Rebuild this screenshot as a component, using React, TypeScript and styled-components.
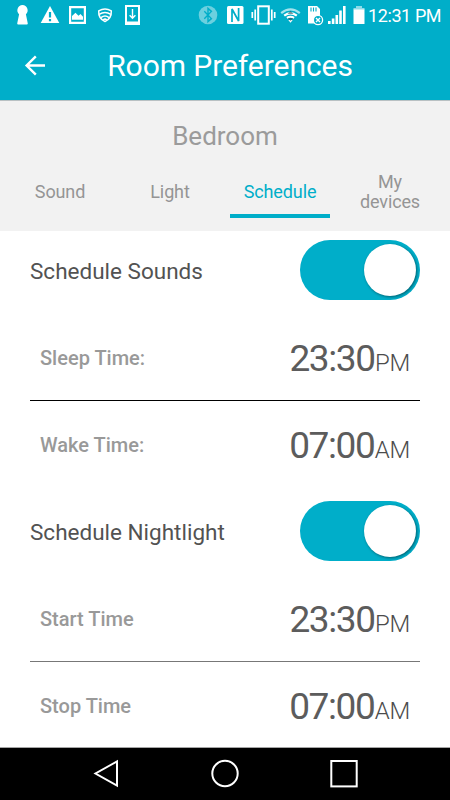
import React from "react";
import styled, { createGlobalStyle } from "styled-components";

const TEAL = "#00aec9";

const GlobalStyle = createGlobalStyle`
  *, *::before, *::after { box-sizing: border-box; }
  html, body { margin: 0; padding: 0; background: #fff; }
  body { font-family: Roboto, "Noto Sans", sans-serif; -webkit-font-smoothing: antialiased; }
`;

const Screen = styled.div`
  width: 450px;
  height: 800px;
  display: flex;
  flex-direction: column;
  overflow: hidden;
  background: #fff;
`;

const StatusBar = styled.div`
  height: 32px;
  flex: none;
  display: flex;
  justify-content: space-between;
  background: ${TEAL};
  color: #fff;
`;

const StatusGroup = styled.div`
  display: flex;
  height: 32px;
`;

const StatusIcon = styled.svg`
  display: block;
  flex: none;
  height: 32px;
`;

const Clock = styled.span`
  width: 82px;
  height: 32px;
  line-height: 32px;
  font-size: 18px;
  letter-spacing: -0.4px;
  white-space: nowrap;
`;

const Header = styled.header`
  height: 69px;
  flex: none;
  display: grid;
  grid-template-columns: 70px 320px 60px;
  align-items: center;
  background: ${TEAL};
  border-bottom: 1px solid #b9c1c3;
  color: #fff;
`;

const BackButton = styled.button`
  width: 70px;
  height: 66px;
  padding: 0;
  border: 0;
  background: none;
  display: block;
`;

const Title = styled.h1`
  margin: 0;
  text-align: center;
  font-size: 30px;
  font-weight: 400;
  line-height: 68px;
  letter-spacing: -0.06px;
`;

const RoomPanel = styled.section`
  height: 130px;
  flex: none;
  background: #f2f2f2;
`;

const RoomName = styled.h2`
  margin: 0;
  height: 65px;
  padding-top: 4px;
  line-height: 62px;
  text-align: center;
  font-size: 26px;
  font-weight: 400;
  color: #9b9b9b;
`;

const Tabs = styled.nav`
  display: flex;
  padding: 0 5px;
`;

const Tab = styled.div<{ $active?: boolean }>`
  width: 100px;
  height: 52px;
  margin: 0 5px;
  padding: 4px 15px 0;
  display: flex;
  align-items: center;
  justify-content: center;
  text-align: center;
  font-size: 18px;
  line-height: 20px;
  letter-spacing: -0.12px;
  color: ${(p) => (p.$active ? TEAL : "#959595")};
  border-bottom: 4px solid ${(p) => (p.$active ? TEAL : "transparent")};
`;

const Content = styled.main`
  flex: 1;
  min-height: 0;
  overflow: hidden;
  padding: 9px 30px 0;
`;

const Group = styled.section`
  height: 261px;
`;

const GroupHead = styled.div`
  height: 60px;
  display: flex;
  align-items: center;
  justify-content: space-between;
`;

const GroupTitle = styled.h3`
  margin: 0;
  padding-top: 2px;
  font-size: 22.5px;
  font-weight: 400;
  color: #525252;
`;

const Switch = styled.div`
  width: 120px;
  height: 60px;
  padding: 4px;
  border-radius: 30px;
  display: flex;
  justify-content: flex-end;
  background: ${TEAL};
`;

const Knob = styled.div`
  width: 52px;
  height: 52px;
  border-radius: 50%;
  background: #fff;
  box-shadow: 1px 1px 3px rgba(0, 0, 0, 0.45);
`;

const TimeList = styled.div`
  padding-top: 16px;
`;

const TimeRow = styled.div<{ $line?: string }>`
  height: ${(p) => (p.$line ? 85 : 88)}px;
  padding: 0 10px;
  display: flex;
  align-items: center;
  justify-content: space-between;
  border-bottom: ${(p) => (p.$line ? `1px solid ${p.$line}` : "0")};
`;

const TimeLabel = styled.span`
  font-size: 20px;
  font-weight: 500;
  color: #999;
`;

const TimeValue = styled.span`
  display: flex;
  align-items: baseline;
  padding-top: 5px;
  font-size: 37px;
  line-height: 42px;
  letter-spacing: -1.4px;
  color: #5c5c5c;
`;

const Meridiem = styled.span`
  margin-left: 0.5px;
  font-size: 24px;
  font-weight: 300;
  letter-spacing: -0.3px;
  color: #4c4c4c;
`;

const NavBar = styled.footer`
  height: 53px;
  flex: none;
  background: #000;
  border-top: 1px solid #a5a5a5;
`;

const NavIcons = styled.svg`
  display: block;
`;

interface TimeEntry {
  label: string;
  time: string;
  half: string;
}

interface ScheduleProps {
  title: string;
  line: string;
  entries: [TimeEntry, TimeEntry];
}

function Schedule({ title, line, entries }: ScheduleProps) {
  return (
    <Group>
      <GroupHead>
        <GroupTitle>{title}</GroupTitle>
        <Switch role="switch" aria-checked="true">
          <Knob />
        </Switch>
      </GroupHead>
      <TimeList>
        {entries.map((e, i) => (
          <TimeRow key={e.label} $line={i === 0 ? line : undefined}>
            <TimeLabel>{e.label}</TimeLabel>
            <TimeValue>
              {e.time}
              <Meridiem>{e.half}</Meridiem>
            </TimeValue>
          </TimeRow>
        ))}
      </TimeList>
    </Group>
  );
}

function Notifications() {
  return (
    <StatusIcon width="150" height="32" viewBox="0 0 150 32" fill="none" stroke="#fff">
      <path d="M22.5 5a5.3 5.3 0 0 1 3.4 9.2L27.8 23.5Q27.8 24.6 26.8 24.6H18.2Q17.2 24.6 17.2 23.5L19.1 14.2A5.3 5.3 0 0 1 22.5 5Z" fill="#fff" stroke="none" />
      <path d="M50 6 59.3 23H40.7Z" fill="#fff" stroke="none" />
      <path d="M50 12v5.5M50 19v2.2" stroke={TEAL} strokeWidth="2.2" />
      <path d="M69 6h17v18H69ZM71.2 8.2V21.8H83.8V8.2Z" fill="#fff" fillRule="evenodd" stroke="none" />
      <path d="M72 19.8V16L75.5 12.8 78.5 15.8 80.5 14 83 16.8V19.8Z" fill="#fff" stroke="none" />
      <path d="M98.7 10.8Q105 7.2 111.3 10.8Q111.8 18.5 105 21.6Q98.2 18.5 98.7 10.8Z" strokeWidth="1.5" strokeLinejoin="round" />
      <path d="M99.2 14.4Q105 10.6 110.8 14.4M101 17.6Q105 14.4 109 17.6M103.2 20Q105 18.4 106.8 20" strokeWidth="1.6" />
      <path d="M125 5h15v20H125ZM127 7V21.5H138V7Z" fill="#fff" fillRule="evenodd" stroke="none" />
      <path d="M132.5 9v9M129.6 15.3 132.5 18.2 135.4 15.3" strokeWidth="1.4" />
    </StatusIcon>
  );
}

function SystemIcons() {
  return (
    <StatusIcon width="178" height="32" viewBox="190 0 178 32" fill="none" stroke="#fff">
      <circle cx="208" cy="15" r="9.3" fill="#fff" fillOpacity=".42" stroke="none" />
      <path d="M204.3 11.2 211.4 18.6 208 21.6V8.4L211.4 11.4 204.3 18.8" stroke={TEAL} strokeWidth="1.4" />
      <rect x="227" y="6" width="16.5" height="18" rx="1.5" fill="#fff" stroke="none" />
      <path d="M232 22V9L238.6 21V8" stroke={TEAL} strokeWidth="1.7" />
      <rect x="258.2" y="6.3" width="10.6" height="17.4" strokeWidth="2" />
      <path d="M255.2 9.5v11M271.8 9.5v11M252.3 12v6M274.7 12v6" strokeWidth="1.7" />
      <path d="M281.2 13.2Q290.5 5.7 299.8 13.2" stroke="#a4e3ed" strokeWidth="2.2" />
      <path d="M284.2 15.7Q290.5 10.8 296.8 15.7M287 18Q290.5 15.5 294 18" strokeWidth="2.2" />
      <path d="M288.3 20h4.4L290.5 22.8Z" fill="#fff" stroke="none" />
      <path d="M287.5 14 290.5 11 293.5 14ZM287.5 18 290.5 21 293.5 18Z" fill="#31525a" fillOpacity=".6" stroke="none" />
      <path d="M308 6H317L320 9V23.5H308Z" fill="#fff" stroke="none" />
      <path d="M311 7.5v4M313.5 7.5v4M316 7.5v4" stroke={TEAL} strokeWidth="1.1" />
      <circle cx="318" cy="20" r="4.6" fill={TEAL} strokeWidth="1.3" />
      <path d="M316 18 320 22M320 18 316 22" strokeWidth="1.4" />
      <path d="M328 21h2.6v3H328ZM331.8 18.5h2.6V24h-2.6ZM335.5 15h2.6v9h-2.6ZM339.2 10.5h2.6V24h-2.6ZM343 6h2.6v18H343Z" fill="#fff" stroke="none" />
      <path d="M356 6h6v2h2.5V10H353.5V8H356Z" fill="#8cdbe8" stroke="none" />
      <path d="M353.5 9.5h11v14.5h-11Z" fill="#fff" stroke="none" />
    </StatusIcon>
  );
}

export default function App() {
  return (
    <>
      <GlobalStyle />
      <Screen>
        <StatusBar>
          <Notifications />
          <StatusGroup>
            <SystemIcons />
            <Clock>12:31 PM</Clock>
          </StatusGroup>
        </StatusBar>
        <Header>
          <BackButton aria-label="Back">
            <svg width="70" height="66" viewBox="0 0 70 66" fill="none" stroke="#fff" strokeWidth="2.4">
              <path d="M45 32.5H27M35.8 23.3 26.6 32.5 35.8 41.7" />
            </svg>
          </BackButton>
          <Title>Room Preferences</Title>
        </Header>
        <RoomPanel>
          <RoomName>Bedroom</RoomName>
          <Tabs>
            <Tab>Sound</Tab>
            <Tab>Light</Tab>
            <Tab $active>Schedule</Tab>
            <Tab>My devices</Tab>
          </Tabs>
        </RoomPanel>
        <Content>
          <Schedule
            title="Schedule Sounds"
            line="#000"
            entries={[
              { label: "Sleep Time:", time: "23:30", half: "PM" },
              { label: "Wake Time:", time: "07:00", half: "AM" },
            ]}
          />
          <Schedule
            title="Schedule Nightlight"
            line="#777"
            entries={[
              { label: "Start Time", time: "23:30", half: "PM" },
              { label: "Stop Time", time: "07:00", half: "AM" },
            ]}
          />
        </Content>
        <NavBar>
          <NavIcons width="450" height="52" viewBox="0 748 450 52" fill="none" stroke="#fff" strokeWidth="2">
            <path d="M117 761.5V785.5L95.5 773.5Z" />
            <circle cx="225" cy="773.5" r="12.7" />
            <rect x="331.3" y="761" width="25.4" height="25.4" />
          </NavIcons>
        </NavBar>
      </Screen>
    </>
  );
}
